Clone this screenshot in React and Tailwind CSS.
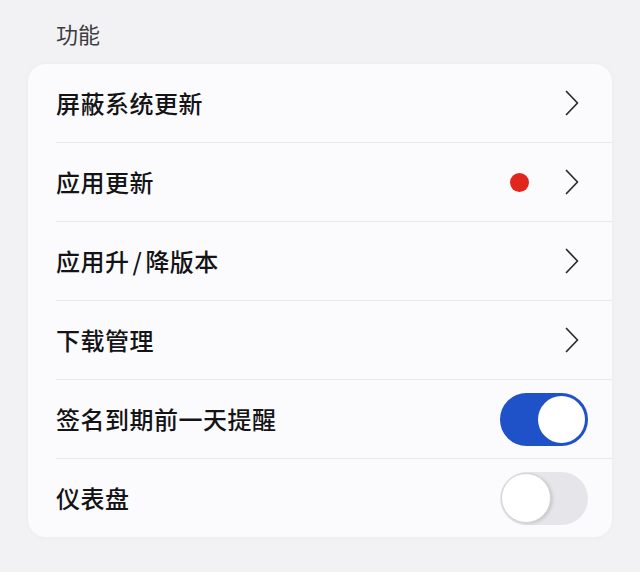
const rows = [
    { label: "屏蔽系统更新", type: "link" },
    { label: "应用更新", type: "link", dot: true },
    { label: <>应用升<span className="mx-[3px]">/</span>降版本</>, type: "link" },
    { label: "下载管理", type: "link" },
    { label: "签名到期前一天提醒", type: "toggle", on: true },
    { label: "仪表盘", type: "toggle", on: false },
]

const Chevron = () => (
    <svg width="14" height="26" viewBox="0 0 14 26" fill="none" className="mr-[9px]">
        <path d="M1.5 1.5 L12.5 13 L1.5 24.5" stroke="#2a2a2e" strokeWidth="1.7" strokeLinecap="round" strokeLinejoin="round" />
    </svg>
)

const Toggle = ({ on }) => (
    <div
        className={`w-[88px] h-[53px] rounded-full flex items-center ${on ? "bg-[#1f51c9] justify-end px-[3px]" : "bg-[#e6e6ea] justify-start px-[1px]"}`}
    >
        <div className={`rounded-full bg-white ${on ? "w-[47px] h-[47px]" : "w-[50px] h-[50px] border border-[#d2d2d6] shadow-[2px_1px_3px_rgba(0,0,0,0.12)]"}`} />
    </div>
)

const App = () => {
    return (
        <div
            className="w-[640px] h-[572px] bg-[#f2f2f5] overflow-hidden"
            style={{ fontFamily: '"Noto Sans CJK SC", "Noto Sans", sans-serif' }}
        >
            <p className="pl-[56px] pt-[18px] h-[64px] text-[22px] leading-[30px] text-[#3c3c40]">功能</p>

            <div className="mx-[28px] bg-[#fbfbfd] rounded-[18px] shadow-[0_0_6px_rgba(0,0,0,0.03)]">
                {rows.map((row, index) => (
                    <div key={index} className="pl-[28px]">
                        {/* separators are inset on the left only */}
                        <div
                            className={`${index === rows.length - 1 ? "h-[78px]" : "h-[79px] border-b border-[#e9e9ed]"} flex items-center pr-[24px]`}
                        >
                            <span className="flex-1 text-[24px] font-medium text-[#141416] tracking-[0.5px]">{row.label}</span>
                            {row.dot && <span className="w-[19px] h-[19px] rounded-full bg-[#e0261d] mr-[36px]" />}
                            {row.type === "link" ? <Chevron /> : <Toggle on={row.on} />}
                        </div>
                    </div>
                ))}
            </div>
        </div>
    )
}

export default App
